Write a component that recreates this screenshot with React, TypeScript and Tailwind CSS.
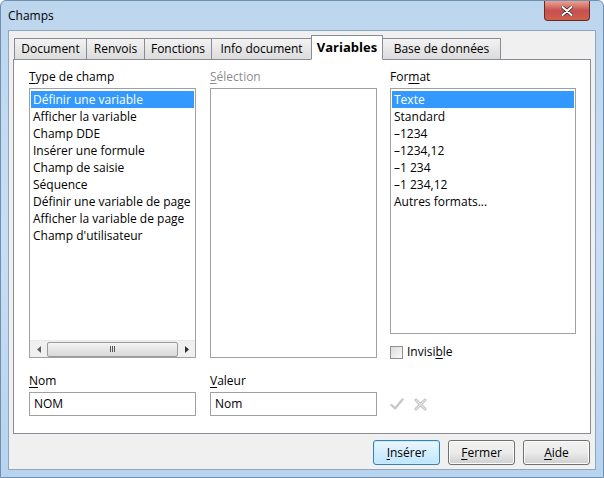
import React from "react";

const typeItems = [
  "Définir une variable",
  "Afficher la variable",
  "Champ DDE",
  "Insérer une formule",
  "Champ de saisie",
  "Séquence",
  "Définir une variable de page",
  "Afficher la variable de page",
  "Champ d'utilisateur",
];

const formatItems = ["Texte", "Standard", "–1234", "–1234,12", "–1 234", "–1 234,12", "Autres formats..."];

const tabs = [
  { t: "Document", w: "w-[73px]" },
  { t: "Renvois", w: "w-[59px]" },
  { t: "Fonctions", w: "w-[68px]" },
  { t: "Info document", w: "w-[101px]" },
  { t: "Variables", w: "w-[72px]" },
  { t: "Base de données", w: "w-[119px]" },
];

function ListBox({ items, width, height, scroll }: { items: string[]; width: string; height: string; scroll?: boolean }) {
  return (
    <div className={`${width} ${height} flex flex-col border border-[#a0a0a0] bg-white overflow-hidden`}>
      <div className="flex-1 pt-[2px] px-[1px] overflow-hidden">
        {items.map((it, i) => (
          <div
            key={it}
            className={`h-[17px] leading-[17px] pl-[2px] whitespace-nowrap ${i === 0 ? "bg-[#3399ff] text-white" : "text-black"}`}
          >
            {it}
          </div>
        ))}
      </div>
      {scroll && (
        <div className="h-[17px] flex items-center bg-[#f0f0f0] border-t border-[#e8e8e8]">
          <div className="w-[17px] flex justify-center">
            <svg width="4" height="7" viewBox="0 0 4 7"><path d="M4 0 L0 3.5 L4 7Z" fill="#606060" /></svg>
          </div>
          <div className="flex-1 h-[15px] rounded-[2px] border border-[#9a9a9a] bg-gradient-to-b from-[#f4f4f4] to-[#d8d8d8] flex items-center justify-center">
            <div className="flex gap-[1px]">
              <div className="w-[1px] h-[6px] bg-[#555]" />
              <div className="w-[1px] h-[6px] bg-[#555]" />
              <div className="w-[1px] h-[6px] bg-[#555]" />
            </div>
          </div>
          <div className="w-[17px] flex justify-center">
            <svg width="4" height="7" viewBox="0 0 4 7"><path d="M0 0 L4 3.5 L0 7Z" fill="#303030" /></svg>
          </div>
        </div>
      )}
    </div>
  );
}

function Btn({ u, rest, primary }: { u: string; rest: string; primary?: boolean }) {
  return (
    <div
      className={`w-[67px] h-[25px] rounded-[3px] border flex items-center justify-center text-black ${
        primary
          ? "border-[#3c7fb1] bg-gradient-to-b from-[#eaf6fd] to-[#bee6fd] shadow-[inset_0_0_0_1px_#c7ebff]"
          : "border-[#707070] bg-gradient-to-b from-[#f2f2f2] via-[#ebebeb] to-[#cfcfcf] shadow-[inset_0_0_0_1px_#fcfcfc]"
      }`}
    >
      <span className="underline underline-offset-2">{u}</span>
      {rest}
    </div>
  );
}

export default function App() {
  return (
    <div
      className="w-[604px] h-[478px] rounded-t-[6px] bg-gradient-to-b from-[#bcd6ee] via-[#c9def2] to-[#b8d3ee] border border-[#6d8fb0] flex flex-col text-[12px] overflow-hidden"
      style={{ fontFamily: '"Open Sans", "Noto Sans", sans-serif' }}
    >
      {/* Title bar */}
      <div className="h-[29px] flex items-start justify-between shrink-0">
        <div className="pl-[7px] pt-[6px] text-black text-[12px]">Champs</div>
        <div className="mr-[13px] w-[46px] h-[20px] rounded-b-[4px] border border-[#6b2b22] border-t-0 bg-gradient-to-b from-[#e8a393] via-[#c75050] to-[#d0604a] flex items-center justify-center">
          <svg width="12" height="10" viewBox="0 0 12 10">
            <path d="M1.5 1 L10.5 9 M10.5 1 L1.5 9" stroke="#3a2020" strokeWidth="3.4" strokeLinecap="round" />
            <path d="M1.5 1 L10.5 9 M10.5 1 L1.5 9" stroke="#ffffff" strokeWidth="2" strokeLinecap="round" />
          </svg>
        </div>
      </div>

      {/* Client area */}
      <div className="mx-[7px] mb-[7px] flex-1 bg-[#f0f0f0] border border-[#8ea6c0] flex flex-col px-[4px] pt-[3px]">
        {/* Tabs */}
        <div className="flex items-end h-[25px] relative z-10 pl-[1px]">
          {tabs.map(({ t, w }) =>
            t === "Variables" ? (
              <div
                key={t}
                className={`${w} h-[25px] -mb-[1px] -ml-[1px] bg-white border border-[#898c95] border-b-white font-bold text-[13px] flex items-center justify-center`}
              >
                {t}
              </div>
            ) : (
              <div
                key={t}
                className={`${w} h-[21px] bg-gradient-to-b from-[#f2f2f2] to-[#dcdcdc] border border-[#898c95] border-b-0 -ml-[1px] first:ml-0 flex items-center justify-center text-black`}
              >
                {t}
              </div>
            )
          )}
        </div>

        {/* Panel */}
        <div className="h-[375px] bg-white border border-[#898c95] pl-[15px] pt-[8px] flex flex-col">
          <div className="flex gap-[14px]">
            <div className="flex flex-col">
              <div className="h-[17px] mb-[3px] text-black">
                <span className="underline underline-offset-2">T</span>ype de champ
              </div>
              <ListBox items={typeItems} width="w-[167px]" height="h-[270px]" scroll />
            </div>
            <div className="flex flex-col">
              <div className="h-[17px] mb-[3px] text-[#8d8d8d]">
                <span className="underline underline-offset-2">S</span>élection
              </div>
              <div className="w-[167px] h-[270px] border border-[#a0a0a0] bg-white" />
            </div>
            <div className="flex flex-col -ml-[1px]">
              <div className="h-[17px] mb-[3px] text-black">
                For<span className="underline underline-offset-2">m</span>at
              </div>
              <ListBox items={formatItems} width="w-[186px]" height="h-[246px]" />
              <div className="flex items-center gap-[4px] mt-[9px]">
                <div className="w-[13px] h-[13px] border border-[#8f8f8f] bg-gradient-to-br from-[#dcdcdc] to-[#fafafa]" />
                <span>
                  Invisi<span className="underline underline-offset-2">b</span>le
                </span>
              </div>
            </div>
          </div>

          <div className="flex gap-[14px] mt-[11px]">
            <div className="flex flex-col">
              <div className="h-[17px] mb-[3px]">
                <span className="underline underline-offset-2">N</span>om
              </div>
              <div className="w-[167px] h-[24px] border border-[#a0a0a0] bg-white pl-[4px] flex items-center">NOM</div>
            </div>
            <div className="flex flex-col">
              <div className="h-[17px] mb-[3px]">
                <span className="underline underline-offset-2">V</span>aleur
              </div>
              <div className="w-[167px] h-[24px] border border-[#a0a0a0] bg-white pl-[4px] flex items-center">Nom</div>
            </div>
            <div className="flex items-end gap-[10px] pb-[5px] -ml-[1px]">
              <svg width="14" height="14" viewBox="0 0 14 14">
                <path d="M1.5 8 L5 11.5 L12.5 2.5" fill="none" stroke="#c8c8c8" strokeWidth="2.4" strokeLinecap="round" strokeLinejoin="round" />
              </svg>
              <svg width="13" height="13" viewBox="0 0 13 13">
                <path d="M2 2 L11 11 M11 2 L2 11" stroke="#bdbdbd" strokeWidth="3" strokeLinecap="round" />
                <path d="M2 2 L11 11 M11 2 L2 11" stroke="#e4e4e4" strokeWidth="1.2" strokeLinecap="round" />
              </svg>
            </div>
          </div>
        </div>

        {/* Buttons */}
        <div className="flex justify-end gap-[8px] pr-[1px] mt-[6px]">
          <Btn u="I" rest="nsérer" primary />
          <Btn u="F" rest="ermer" />
          <Btn u="A" rest="ide" />
        </div>
      </div>
    </div>
  );
}
